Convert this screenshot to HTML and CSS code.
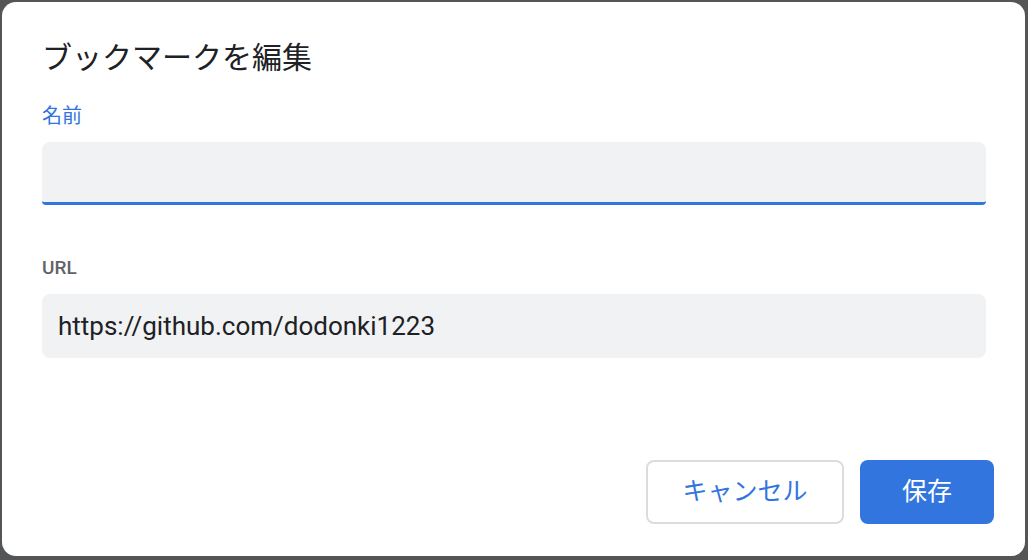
FILE: index.html
```html
<!DOCTYPE html>
<html lang="ja">
<head>
<meta charset="utf-8">
<link rel="stylesheet" href="styles.css">
</head>
<body>
<div class="dialog">
  <h1 class="title">ブックマークを編集</h1>
  <div class="field">
    <label class="label label-active">名前</label>
    <div class="input input-focused"></div>
  </div>
  <div class="field field-url">
    <label class="label label-url">URL</label>
    <div class="input input-url">https://github.com/dodonki1223</div>
  </div>
  <div class="footer">
    <button class="btn btn-cancel">キャンセル</button>
    <button class="btn btn-save">保存</button>
  </div>
</div>
</body>
</html>
```
FILE: styles.css
```css
html, body {
  margin: 0;
  padding: 0;
  background: #545557;
  width: 1028px;
  height: 560px;
  overflow: hidden;
}
body {
  font-family: Roboto, "Noto Sans CJK JP", sans-serif;
}
.dialog {
  margin: 2px 3px 0 2px;
  width: 1023px;
  height: 554px;
  background: #ffffff;
  border-radius: 14px;
  box-sizing: border-box;
  padding: 35px 39px 32px 40px;
  display: flex;
  flex-direction: column;
}
.title {
  margin: 0;
  font-family: "Noto Sans CJK JP", sans-serif;
  font-weight: 400;
  font-size: 30px;
  line-height: 36px;
  color: #202124;
}
.field {
  display: flex;
  flex-direction: column;
  margin-top: 30px;
}
.field-url {
  margin-top: 51px;
}
.label {
  font-size: 20px;
  line-height: 24px;
  height: 24px;
  font-family: "Noto Sans CJK JP", sans-serif;
}
.label-active {
  color: #3275de;
  margin-bottom: 15px;
}
.label-url {
  font-family: Roboto, sans-serif;
  font-weight: 500;
  font-size: 19px;
  color: #5f6368;
  margin-bottom: 14px;
}
.input {
  background: #f1f2f4;
  border-radius: 8px;
  height: 64px;
  box-sizing: border-box;
}
.input-focused {
  height: 63px;
  border-bottom: 3px solid #3275de;
  border-radius: 8px 8px 4px 4px;
}
.input-url {
  padding-left: 16px;
  font-size: 26px;
  line-height: 64px;
  color: #202124;
}
.footer {
  margin-top: auto;
  margin-right: -8px;
  display: flex;
  justify-content: flex-end;
  gap: 16px;
}
.btn {
  height: 64px;
  border-radius: 8px;
  font-family: "Noto Sans CJK JP", sans-serif;
  font-size: 25px;
  line-height: 1;
  padding: 0 0 5px;
  cursor: pointer;
}
.btn-cancel {
  width: 198px;
  background: #ffffff;
  border: 2px solid #dadce0;
  color: #3275de;
}
.btn-save {
  width: 134px;
  background: #3275de;
  border: none;
  color: #ffffff;
}
```
